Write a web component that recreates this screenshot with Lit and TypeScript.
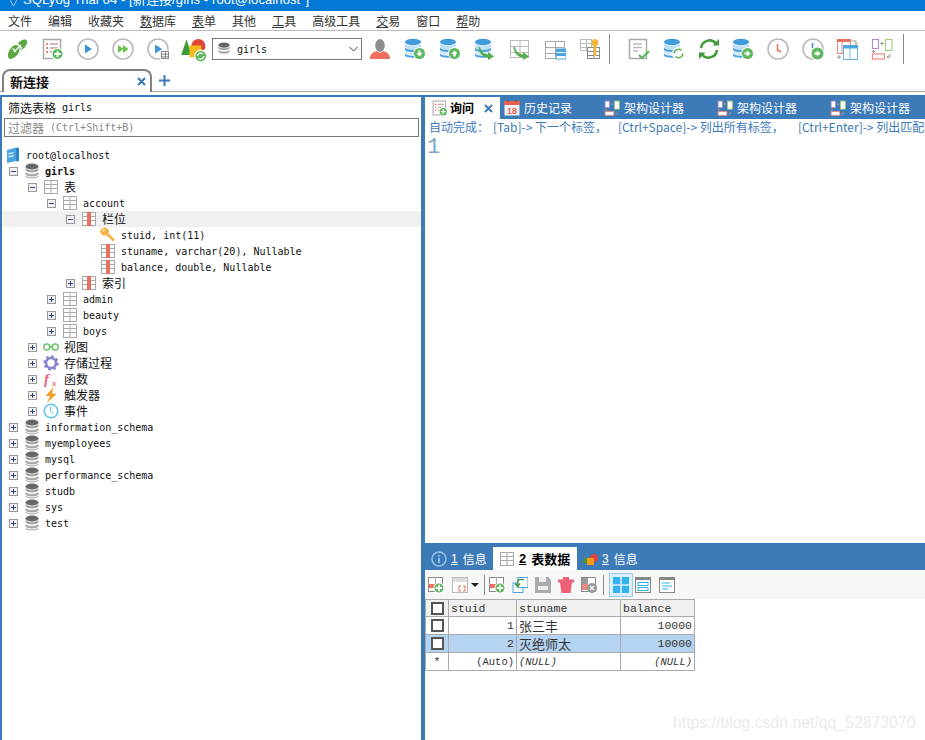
import { LitElement, css, html, svg } from 'lit'
import { customElement } from 'lit/decorators.js'

const BLUE = '#4aa5e0'
const GREEN = '#5cb85c'

// shared svg pieces, all drawn on a 22x22 box unless noted
const cylinder = svg`
  <ellipse cx="9" cy="4" rx="8" ry="3.2" fill="#3f9bdc"/>
  <path d="M1 5.5c2 3 14 3 16 0v3.5c-2 3-14 3-16 0z" fill="#bfe0f5"/>
  <path d="M1 9.5c2 3 14 3 16 0v2.5c-2 3-14 3-16 0z" fill="${BLUE}"/>
  <path d="M1 13c2 3 14 3 16 0v1.5c-2 3-14 3-16 0z" fill="#bfe0f5"/>
  <path d="M1 15.5c2 3 14 3 16 0v2c0 3-16 3-16 0z" fill="${BLUE}"/>`

const badge = (cx: number, cy: number, r: number, glyph: unknown) => svg`
  <circle cx="${cx}" cy="${cy}" r="${r + 1}" fill="#fff"/>
  <circle cx="${cx}" cy="${cy}" r="${r}" fill="${GREEN}"/>
  <g transform="translate(${cx} ${cy})">${glyph}</g>`

const plus = svg`<path d="M-3.2 0h6.4M0-3.2v6.4" stroke="#fff" stroke-width="1.8"/>`
const down = svg`<path d="M-1.2-3h2.4v2.4h2L0 3-3.2-.6h2z" fill="#fff"/>`
const up = svg`<path d="M-1.2 3h2.4V.6h2L0-3-3.2.6h2z" fill="#fff"/>`
const right = svg`<path d="M-3-1.2H-.6v-2L3 0-.6 3.2v-2H-3z" fill="#fff"/>`
const spin = svg`<path d="M-2.6 0a2.6 2.6 0 0 1 4.4-1.8M2.6 0a2.6 2.6 0 0 1-4.4 1.8" stroke="#fff" fill="none" stroke-width="1.1"/>`

const ring = svg`<circle cx="11" cy="11" r="10" fill="#fff" stroke="#bbb" stroke-width="1.6"/>`
const clockHand = svg`<path d="M10.5 6v6l3.5 2" stroke="#e8705f" stroke-width="1.6" fill="none"/>`
const curveArrow = svg`<path d="M6 9c1 5 4 7 8 7.5V14l6 4.5-6 3.5v-2.600C9 19.500 5 15 4.500 9z" fill="#52ae4a"/>`

const grid = (x: number, y: number, w: number, h: number, c = '#aaa') => svg`
  <rect x="${x + 0.5}" y="${y + 0.5}" width="${w - 1}" height="${h - 1}" fill="#fff" stroke="${c}"/>
  <path d="M${x} ${y + h / 3 + 0.5}h${w}M${x} ${y + (2 * h) / 3 + 0.5}h${w}M${x + w / 2 + 0.5} ${y}v${h}" stroke="${c}"/>`

const docLines = svg`
  <rect x="1.500" y="1.500" width="17" height="19" fill="#fff" stroke="#aaa" stroke-width="1.500"/>`

const icons: Record<string, unknown> = {
  connect: svg`
    <path d="M1 16c1-4 4-8 7-9 2 0 3 .5 4 2 1 2 .5 4-.5 6-2 3.500-6 6-8.500 6-1.500-.5-2.500-2.500-2-5z" fill="#5aa843"/>
    <path d="M11 5c2-2 5-4 7.500-3.500 2 .5 2 3 1 5-1 2.500-3.500 5-5.500 5.500-1-2.500-1.500-5-3-7z" fill="#5aa843"/>
    <path d="M7 14l7-7M5.500 10.500l3.500 3M12 7.500l3 3" stroke="#fff" stroke-width="1.300" fill="none"/>`,
  newQuery: svg`${docLines}
    <path d="M4 6h2M4 10h2M4 14h2" stroke="#e8604f" stroke-width="1.500"/>
    <path d="M8 6h8M8 10h8M8 14h4" stroke="#c9a0a0" stroke-width="1.500"/>
    ${badge(15.5, 16, 5, plus)}`,
  play: svg`${ring}<path d="M8 6.500l7 4.500-7 4.500z" fill="#3b95dd"/>`,
  playAll: svg`${ring}<path d="M6 7l5.500 4L6 15zM11 7l5.500 4-5.500 4z" fill="#6cc24a"/>`,
  playTable: svg`${ring}<path d="M8 6.500l7 4.500-7 4.500z" fill="#3b95dd"/>
    <rect x="13" y="12" width="9" height="10" fill="#fff"/>${grid(14, 13, 8, 8, '#888')}`,
  shapes: svg`
    <path d="M1 16L5.500 3 10 16z" fill="#3f9b35"/>
    <circle cx="15.500" cy="8.500" r="6" fill="#e0453a"/>
    <rect x="8" y="8" width="10" height="10" fill="#f7b916"/>
    ${badge(17.5, 17, 4.5, spin)}`,
  user: svg`
    <ellipse cx="11" cy="7.500" rx="4.800" ry="6.500" fill="#8e8e8e"/>
    <path d="M1 21c0-5 3-7 7-8 1.500 2 4.500 2 6 0 4 1 7 3 7 8z" fill="#ee6f5e"/>`,
  dbDown: svg`${cylinder}${badge(15.5, 15.5, 5.5, down)}`,
  dbUp: svg`${cylinder}${badge(15.5, 15.5, 5.5, up)}`,
  dbArrow: svg`${cylinder}${curveArrow}`,
  tableArrow: svg`${grid(1, 2, 19, 18, '#bbb')}${curveArrow}`,
  tableBlue: svg`${grid(1, 3, 20, 18, '#aaa')}
    <rect x="12" y="11" width="10" height="10" fill="#fff" stroke="${BLUE}"/>
    <rect x="12" y="11" width="10" height="3" fill="${BLUE}"/>
    <rect x="12" y="15" width="10" height="3" fill="${BLUE}"/>`,
  tableKey: svg`${grid(1, 1, 12, 12, '#bbb')}${grid(8, 9, 13, 12, '#888')}
    <circle cx="16" cy="4.500" r="3.500" fill="#f4b63f"/>
    <path d="M16 7v11" stroke="#f4b63f" stroke-width="2.600"/>`,
  docCheck: svg`${docLines}
    <path d="M5 6h9M5 9.500h9M5 13h5" stroke="#bbb" stroke-width="1.300"/>
    <path d="M11 17l3 3 7-7" stroke="#5cb85c" stroke-width="2.200" fill="none"/>`,
  dbRefresh: svg`${cylinder}
    <circle cx="15.500" cy="15.500" r="6.500" fill="#fff"/>
    <g transform="translate(15.500 15.500) scale(1.700)" >
      <path d="M-2.600 0a2.600 2.600 0 0 1 4.400-1.800M2.600 0a2.600 2.600 0 0 1-4.400 1.800" stroke="#52ae4a" fill="none" stroke-width=".8"/>
    </g>`,
  refresh: svg`
    <path d="M3 10a8.500 8.500 0 0 1 15-4.500" stroke="#3f9b35" stroke-width="2.400" fill="none"/>
    <path d="M19 12a8.500 8.500 0 0 1-15 4.500" stroke="#3f9b35" stroke-width="2.400" fill="none"/>
    <path d="M14.500 7.500H21V1zM7.500 14.500H1V21z" fill="#3f9b35"/>`,
  dbRight: svg`${cylinder}${badge(15.5, 15.5, 5.5, right)}`,
  clock: svg`${ring}${clockHand}`,
  clockRun: svg`${ring}<path d="M10.500 5v5" stroke="#3b95dd" stroke-width="1.600"/>${badge(15.5, 15.5, 6, right)}`,
  tables: svg`
    <rect x="1.500" y="1.500" width="13" height="14" fill="#fff" stroke="#ee8a7d"/>
    <rect x="1" y="1" width="14" height="3" fill="#e8705f"/>
    <path d="M6 4v11" stroke="#ee8a7d"/>
    <path d="M16 3h4v3M18.500 5l1.500 1.500L21.500 5" stroke="#999" fill="none"/>
    <rect x="7.500" y="7.500" width="14" height="14" fill="#fff" stroke="#6db4e6"/>
    <rect x="7" y="7" width="15" height="3.500" fill="#4aa5e0"/>
    <path d="M14 10v11" stroke="#6db4e6"/>
    <path d="M1 19h4M3 17v4" stroke="#999"/>`,
  schema: svg`
    <rect x="1.500" y="1.500" width="6" height="9" fill="#fff" stroke="#b08ec9" stroke-width="1.200"/>
    <rect x="14.500" y="1.500" width="6.500" height="11" fill="#fff" stroke="#a4cf7e" stroke-width="1.200"/>
    <rect x="1.500" y="16" width="12" height="5" fill="#fff" stroke="#ee8a7d" stroke-width="1.200"/>
    <path d="M9 5.500h4M11 3.500v4M2.500 12v3M1 13.500h3" stroke="#999"/>
    <path d="M19 16v3h-3M17.500 17.500L16 19l1.500 1.500" stroke="#999" fill="none"/>`,
}

const ic = (name: string, size = 22) =>
  html`<svg width="${size}" height="${size}" viewBox="0 0 22 22">${icons[name]}</svg>`

const dbGray = html`<svg width="16" height="16" viewBox="0 0 16 16">
  <ellipse cx="8" cy="3.500" rx="6.500" ry="3" fill="#666"/>
  <path d="M1.500 5c2 2.500 11 2.500 13 0v2.500c-2 2.500-11 2.500-13 0z" fill="#a8a8a8"/>
  <path d="M1.500 9c2 2.500 11 2.500 13 0v2.500c-2 2.500-11 2.500-13 0z" fill="#a8a8a8"/>
  <path d="M1.500 12.500c2 2.500 11 2.500 13 0v1c-1 2.500-12 2.500-13 0z" fill="#a8a8a8"/>
</svg>`

const treeIcons: Record<string, unknown> = {
  server: html`<svg width="16" height="16" viewBox="0 0 16 16">
    <path d="M2 3l9-2.500V14l-9 2z" fill="#4aa5e0"/><path d="M11 .5l3 .5v13l-3 .5z" fill="#2f85c6"/>
    <path d="M3.500 6l5-1v1.500l-5 1zM3.500 9l5-1v1.500l-5 1z" fill="#cfe8f8"/></svg>`,
  db: dbGray,
  table: html`<svg width="16" height="16" viewBox="0 0 16 16">
    <rect x="1.500" y="1.500" width="13" height="13" fill="#fff" stroke="#aaa"/>
    <path d="M1 5.500h14M1 9.500h14M8 1v14" stroke="#aaa"/></svg>`,
  column: html`<svg width="16" height="16" viewBox="0 0 16 16">
    <rect x="1.500" y="1.500" width="13" height="13" fill="#fff" stroke="#aaa"/>
    <path d="M1 5.500h14M1 9.500h14" stroke="#aaa"/><rect x="6" y="1" width="4" height="14" fill="#ea6f60"/></svg>`,
  key: html`<svg width="16" height="16" viewBox="0 0 16 16">
    <ellipse cx="4.500" cy="4.500" rx="4.500" ry="4" fill="#f5b547"/>
    <circle cx="3.500" cy="3.500" r="1.200" fill="#fde6b5"/>
    <path d="M6 6l8 7.500" stroke="#f5b547" stroke-width="3"/></svg>`,
  views: html`<svg width="16" height="16" viewBox="0 0 16 16">
    <circle cx="3.800" cy="8" r="3" fill="none" stroke="#6cc46a" stroke-width="1.500"/>
    <circle cx="12.200" cy="8" r="3" fill="none" stroke="#6cc46a" stroke-width="1.500"/>
    <path d="M6.500 7.500h3" stroke="#6cc46a" stroke-width="1.500"/></svg>`,
  procs: html`<svg width="16" height="16" viewBox="0 0 16 16">
    <circle cx="8" cy="8" r="5" fill="none" stroke="#8783d0" stroke-width="2.600"/>
    <circle cx="8" cy="8" r="6.700" fill="none" stroke="#8783d0" stroke-width="2" stroke-dasharray="2.600 2.660"/></svg>`,
  funcs: html`<svg width="16" height="16" viewBox="0 0 16 16">
    <text x="1" y="13" class="fx">f</text><text x="9" y="14.500" class="fxs">x</text></svg>`,
  triggers: html`<svg width="16" height="16" viewBox="0 0 16 16">
    <path d="M10.500 0L2.500 9h4.500L4 16l9.500-9.500H9z" fill="#f59b23"/></svg>`,
  events: html`<svg width="16" height="16" viewBox="0 0 16 16">
    <circle cx="8" cy="8" r="6.800" fill="#fff" stroke="#5cc0f0" stroke-width="1.500"/>
    <path d="M7.500 3.500V8l3 3" stroke="#5cc0f0" fill="none"/></svg>`,
}

type Row = { label: string; icon: string; depth: number; exp?: 'plus' | 'minus' | 'none'; bold?: boolean; hl?: boolean }

const rows: Row[] = [
  { label: 'girls', icon: 'db', depth: 0, exp: 'minus', bold: true },
  { label: '表', icon: 'table', depth: 1, exp: 'minus' },
  { label: 'account', icon: 'table', depth: 2, exp: 'minus' },
  { label: '栏位', icon: 'column', depth: 3, exp: 'minus', hl: true },
  { label: 'stuid, int(11)', icon: 'key', depth: 4, exp: 'none' },
  { label: 'stuname, varchar(20), Nullable', icon: 'column', depth: 4, exp: 'none' },
  { label: 'balance, double, Nullable', icon: 'column', depth: 4, exp: 'none' },
  { label: '索引', icon: 'column', depth: 3 },
  { label: 'admin', icon: 'table', depth: 2 },
  { label: 'beauty', icon: 'table', depth: 2 },
  { label: 'boys', icon: 'table', depth: 2 },
  { label: '视图', icon: 'views', depth: 1 },
  { label: '存储过程', icon: 'procs', depth: 1 },
  { label: '函数', icon: 'funcs', depth: 1 },
  { label: '触发器', icon: 'triggers', depth: 1 },
  { label: '事件', icon: 'events', depth: 1 },
  { label: 'information_schema', icon: 'db', depth: 0 },
  { label: 'myemployees', icon: 'db', depth: 0 },
  { label: 'mysql', icon: 'db', depth: 0 },
  { label: 'performance_schema', icon: 'db', depth: 0 },
  { label: 'studb', icon: 'db', depth: 0 },
  { label: 'sys', icon: 'db', depth: 0 },
  { label: 'test', icon: 'db', depth: 0 },
]

// first character of some menu items carries the access-key underline
const menus = [
  ['', '文件'], ['', '编辑'], ['', '收藏夹'], ['数', '据库'], ['表', '单'], ['', '其他'],
  ['工', '具'], ['', '高级工具'], ['交', '易'], ['', '窗口'], ['帮', '助'],
]
const toolsA = ['connect', 'newQuery', 'play', 'playAll', 'playTable', 'shapes']
const toolsB = ['user', 'dbDown', 'dbUp', 'dbArrow', 'tableArrow', 'tableBlue', 'tableKey']
const toolsC = ['docCheck', 'dbRefresh', 'refresh', 'dbRight', 'clock', 'clockRun', 'tables', 'schema']

const isCjk = (s: string) => /[^\x00-\x7f]/.test(s)

@customElement('app-root')
export class AppRoot extends LitElement {
  static styles = css`
    :host {
      display: block;
      position: relative;
      width: 925px;
      height: 740px;
      overflow: hidden;
      background: #fff;
      font-family: 'Noto Sans CJK SC', 'Noto Sans', sans-serif;
      font-size: 12px;
      color: #111;
    }
    .mono {
      font-family: 'DejaVu Sans Mono', 'Liberation Mono', monospace;
      font-size: 10px;
    }
    .title {
      height: 11px;
      background: #0078d7;
      color: #fff;
      overflow: hidden;
      font-size: 13px;
      line-height: 0;
      display: flex;
      align-items: flex-start;
      padding-left: 10px;
      white-space: nowrap;
      letter-spacing: 0.1px;
      font-family: 'Liberation Sans', 'Noto Sans CJK SC', sans-serif;
    }
    .title svg {
      margin-right: 6px;
      flex: none;
    }
    .menu {
      height: 19px;
      display: flex;
      gap: 16px;
      padding-left: 8px;
      align-items: center;
      border-bottom: 1px solid #bbb;
      line-height: 19px;
      color: #333;
    }
    .toolbar {
      height: 36px;
      display: flex;
      align-items: center;
    }
    .btn {
      width: 35px;
      height: 22px;
      display: flex;
      justify-content: center;
      align-items: center;
      flex: none;
    }
    .btn.c {
      width: 34.7px;
    }
    .sep {
      width: 1px;
      height: 30px;
      background: #888;
      flex: none;
    }
    .sep.a {
      margin: 0 12px 0 2px;
    }
    .sep.b {
      margin-left: 3px;
    }
    .combo {
      width: 150px;
      height: 22px;
      box-sizing: border-box;
      margin-left: 2px;
      border: 1px solid #777;
      display: flex;
      align-items: center;
      padding-left: 4px;
      gap: 6px;
      flex: none;
    }
    .combo svg:last-child {
      margin-left: auto;
      margin-right: 3px;
    }
    .tabs {
      height: 25px;
      box-sizing: border-box;
      margin-bottom: 3px;
      display: flex;
      align-items: flex-end;
      border-bottom: 1px solid #aaa;
    }
    .conn-tab {
      width: 150px;
      height: 23px;
      margin: 0 0 -1px 2px;
      border: 2px solid #808080;
      border-bottom: 0;
      border-radius: 8px 8px 0 0;
      display: flex;
      align-items: center;
      padding-left: 6px;
      box-sizing: border-box;
      background: #fff;
      font-weight: 700;
      font-size: 13px;
      flex: none;
    }
    .conn-tab svg {
      margin-left: auto;
      margin-right: 4px;
    }
    .add {
      width: 24px;
      display: flex;
      justify-content: center;
      align-self: center;
      margin-top: 2px;
      flex: none;
    }
    .main {
      display: flex;
      gap: 4px;
      height: 645px;
      box-sizing: border-box;
      padding: 2px 0 0 2px;
      background: #3d7ab8;
    }
    .left {
      width: 419px;
      flex: none;
      background: #fff;
      box-sizing: border-box;
      padding-top: 2px;
    }
    .filter-label {
      height: 18px;
      padding-left: 6px;
      display: flex;
      gap: 6px;
      align-items: center;
      line-height: 18px;
    }
    .filter {
      height: 19px;
      margin: 1px 2px 0;
      border: 1px solid #777;
      box-sizing: border-box;
      padding-left: 3px;
      display: flex;
      gap: 6px;
      align-items: center;
      color: #888;
      line-height: 17px;
    }
    .tree {
      margin-top: 10px;
    }
    .row {
      height: 16px;
      display: flex;
      align-items: center;
      line-height: 16px;
      white-space: nowrap;
    }
    .row .mono {
      padding-top: 2px;
    }
    .row.root {
      padding-left: 3px;
    }
    .row.hl {
      background: #f0f0f0;
    }
    .exp {
      width: 9px;
      height: 9px;
      margin-right: 6px;
      flex: none;
    }
    .ti {
      width: 16px;
      height: 16px;
      margin-right: 5px;
      flex: none;
    }
    .row.b .mono {
      font-weight: 700;
    }
    .fx {
      font: italic 700 15px 'Liberation Serif', serif;
      fill: #ec5f7a;
    }
    .fxs {
      font: italic 700 9px 'Liberation Serif', serif;
      fill: #ec5f7a;
    }
    .cal {
      font: 700 9px 'Liberation Sans', sans-serif;
      fill: #e8604f;
      text-anchor: middle;
    }
    .right {
      flex: 1;
      min-width: 0;
      display: flex;
      flex-direction: column;
      background: #fff;
    }
    .qtabs {
      height: 22px;
      background: #3d7ab8;
      display: flex;
      color: #fff;
      flex: none;
    }
    .qtab {
      display: flex;
      align-items: center;
      gap: 4px;
      flex: none;
      line-height: 22px;
      width: 113px;
      white-space: nowrap;
    }
    .qtab.hist {
      width: 104px;
      padding-left: 4px;
      box-sizing: border-box;
    }
    .qtab.on {
      width: 75px;
      background: #fff;
      color: #000;
      font-weight: 700;
      padding-left: 7px;
      gap: 0;
      box-sizing: border-box;
    }
    .qtab.on span {
      margin-left: 2px;
    }
    .qtab.on svg:last-child {
      margin-left: 10px;
    }
    .editor {
      height: 424px;
      flex: none;
      padding-left: 4px;
      box-sizing: border-box;
      overflow: hidden;
      color: #3d7ab8;
    }
    .hint {
      height: 17px;
      line-height: 16px;
      white-space: nowrap;
      display: flex;
      width: 600px;
    }
    .hint span {
      flex: none;
    }
    .hint .h1 {
      width: 64px;
    }
    .hint .h2 {
      width: 125px;
    }
    .hint .h3 {
      width: 180px;
    }
    .lineno {
      font: 22px/20px 'Liberation Mono', monospace;
      color: #7ba3c9;
      margin: 2px 0 0 -2px;
    }
    .band {
      height: 27px;
      background: #3d7ab8;
      display: flex;
      align-items: flex-end;
      color: #fff;
      flex: none;
    }
    .btab {
      height: 23px;
      display: flex;
      align-items: center;
      flex: none;
      box-sizing: border-box;
      white-space: nowrap;
    }
    .btab u {
      margin-right: 5px;
      font-family: 'Liberation Sans', sans-serif;
    }
    .btab.i {
      width: 68px;
      padding-left: 6px;
    }
    .btab.i svg {
      margin-right: 4px;
    }
    .btab.on {
      width: 84px;
      background: #fff;
      color: #000;
      font-weight: 700;
      font-size: 13px;
      padding-left: 6px;
    }
    .btab.on svg {
      margin-right: 4px;
    }
    .btab.t {
      padding-left: 5px;
    }
    .btab.t svg {
      margin-right: 4px;
    }
    .rtools {
      height: 29px;
      background: #f7f7f7;
      display: flex;
      align-items: center;
      padding-left: 3px;
      flex: none;
    }
    .tb {
      width: 16px;
      height: 16px;
      flex: none;
      margin-right: 7px;
    }
    .tb.w8 {
      margin-right: 8px;
    }
    .tb.w0 {
      margin-right: 3px;
    }
    .tb.w5 {
      margin-right: 6px;
    }
    .drop {
      margin-right: 5px;
      flex: none;
    }
    .rs {
      width: 1px;
      height: 20px;
      background: #888;
      flex: none;
      margin-right: 4px;
    }
    .rs.wide {
      margin-right: 5px;
    }
    .sel {
      width: 24px;
      height: 24px;
      box-sizing: border-box;
      border: 1px solid #9ccbef;
      background: #dcedfb;
      display: flex;
      align-items: center;
      justify-content: center;
      flex: none;
      margin-right: 2px;
    }
    table {
      border-collapse: collapse;
      table-layout: fixed;
      width: 269px;
      font-family: 'Liberation Mono', monospace;
      font-size: 11.5px;
      color: #333;
    }
    col.c0 {
      width: 23px;
    }
    col.c1 {
      width: 68px;
    }
    col.c2 {
      width: 104px;
    }
    col.c3 {
      width: 74px;
    }
    td,
    th {
      height: 18px;
      padding: 0 2px;
      border: 1px solid #aaa;
      font-weight: 400;
      text-align: left;
      line-height: 15px;
      box-sizing: border-box;
      overflow: hidden;
      white-space: nowrap;
    }
    th {
      height: 17px;
      background: #f0f0f0;
    }
    td.n {
      text-align: right;
    }
    td.c,
    th.c {
      text-align: center;
      padding: 0;
    }
    td.z {
      font-family: 'Noto Sans CJK SC', sans-serif;
      font-size: 13px;
    }
    tr.s td {
      background: #b5d4f2;
    }
    .nil {
      font-style: italic;
      font-size: 10.5px;
    }
    .auto {
      font-size: 10.5px;
    }
    .ck {
      display: block;
      width: 9px;
      height: 9px;
      margin: 0 auto;
      border: 2px solid #555;
      background: #fff;
    }
    .mark {
      position: absolute;
      left: 673px;
      top: 713px;
      font: 15.8px/20px 'Liberation Sans', sans-serif;
      color: #ebebeb;
      white-space: nowrap;
    }
  `

  private exp(kind: 'plus' | 'minus' | 'none' = 'plus') {
    if (kind === 'none') return html`<span class="exp"></span>`
    return html`<svg class="exp" viewBox="0 0 9 9">
      <rect x=".5" y=".5" width="8" height="8" fill="#f0f0f0" stroke="#999"/>
      <path d="${kind === 'plus' ? 'M2 4.500h5M4.500 2v5' : 'M2 4.500h5'}" stroke="#33458c"/>
    </svg>`
  }

  private label(text: string) {
    return isCjk(text) ? html`<span>${text}</span>` : html`<span class="mono">${text}</span>`
  }

  private renderRow(r: Row) {
    const pad = 7 + r.depth * 19
    return html`<div class="row ${r.hl ? 'hl' : ''} ${r.bold ? 'b' : ''}" style="padding-left:${pad}px">
      ${this.exp(r.exp)}
      <span class="ti">${treeIcons[r.icon]}</span>
      ${this.label(r.label)}
    </div>`
  }

  private renderToolbar() {
    return html`<div class="toolbar">
      ${toolsA.map((n) => html`<div class="btn">${ic(n, n === 'shapes' ? 26 : 22)}</div>`)}
      <div class="combo">
        <svg width="14" height="14" viewBox="0 0 16 16">
          <ellipse cx="8" cy="3.500" rx="6.500" ry="3" fill="#666"/>
          <path d="M1.500 5c2 2.500 11 2.500 13 0v2.500c-2 2.500-11 2.500-13 0zM1.500 9c2 2.500 11 2.500 13 0v2.500c-2 2.500-11 2.500-13 0z" fill="#a8a8a8"/>
        </svg>
        <span class="mono">girls</span>
        <svg width="9" height="6" viewBox="0 0 9 6"><path d="M.5 1l4 4 4-4" fill="none" stroke="#444"/></svg>
      </div>
      ${toolsB.map((n) => html`<div class="btn">${ic(n)}</div>`)}
      <div class="sep a"></div>
      ${toolsC.map((n) => html`<div class="btn c">${ic(n)}</div>`)}
      <div class="sep b"></div>
    </div>`
  }

  private renderResultTools() {
    const square = (inner: unknown, cls = '') =>
      html`<svg class="tb ${cls}" viewBox="0 0 16 16">${inner}</svg>`
    const gridRed = svg`
      <rect x=".5" y=".5" width="14" height="14" fill="#fff" stroke="#888"/>
      <path d="M0 7.500h15M7.500 0v15" stroke="#aaa"/>
      <rect x="1" y="7" width="6" height="4" fill="#ee6f5e"/>`
    return html`<div class="rtools">
      ${square(svg`${gridRed}${badge(11, 11, 4.5, plus)}`, 'w8')}
      ${square(svg`<rect x=".5" y=".5" width="15" height="15" fill="#fff" stroke="#bbb"/>
        <rect x="1" y="1" width="14" height="4" fill="#ddd"/>
        <path d="M9 9H7v5h2M11 9h2v5h-2" stroke="#ee6f5e" fill="none"/>`, 'w0')}
      <svg class="drop" width="8" height="4" viewBox="0 0 8 4"><path d="M0 0h8L4 4z" fill="#222"/></svg>
      <div class="rs"></div>
      ${square(svg`${gridRed}${badge(11, 11, 4.5, plus)}`)}
      ${square(svg`<rect x="1" y="6" width="10" height="9.500" fill="#fff" stroke="#4aa5e0"/>
        <rect x="6" y=".5" width="10" height="10" fill="#fff" stroke="#4aa5e0"/>
        <path d="M12 2.500H8.500a3 3 0 0 0-3 3V9M3 6.500l2.500 3 2.500-3" stroke="#4f9a4a" fill="none" stroke-width="1.500"/>`)}
      ${square(svg`<path d="M0 0h13l3 3v13H0z" fill="#aaa"/><rect x="4" y="0" width="7" height="5" fill="#eee"/>
        <rect x="3" y="9" width="10" height="4" fill="#eee"/>`)}
      ${square(svg`<path d="M0 2.500h16v3H14L12.500 16h-9L2 5.500H0z" fill="#ee6078"/><rect x="5" y="0" width="6" height="3" fill="#ee6078"/>`)}
      ${square(svg`<rect x=".5" y=".5" width="14" height="14" fill="#fff" stroke="#888"/>
        <rect x="1" y="1" width="6" height="6" fill="#999"/>
        <rect x="1" y="7" width="6" height="6" fill="#ee8a7d"/>
        <circle cx="11" cy="11" r="5" fill="#999"/>
        <path d="M9 9l4 4M13 9l-4 4" stroke="#fff" stroke-width="1.400"/>`, 'w5')}
      <div class="rs wide"></div>
      <div class="sel">
        <svg width="16" height="16" viewBox="0 0 16 16">
          <path d="M0 0h7.200v7.200H0zM8.800 0H16v7.200H8.800zM0 8.800h7.200V16H0zM8.800 8.800H16V16H8.800z" fill="#32b3ee"/>
        </svg>
      </div>
      ${square(svg`<rect x=".5" y=".5" width="15" height="15" fill="#fff" stroke="#888"/>
        <rect x="0" y="0" width="16" height="3" fill="#888"/>
        <rect x="3" y="5.500" width="10" height="3" fill="none" stroke="#32b3ee"/>
        <rect x="3" y="10.500" width="10" height="3" fill="none" stroke="#32b3ee"/>`, 'w8')}
      ${square(svg`<rect x=".5" y=".5" width="15" height="15" fill="#fff" stroke="#888"/>
        <rect x="0" y="0" width="16" height="3" fill="#888"/>
        <path d="M3 6h8M3 9h10M3 12h6" stroke="#32b3ee"/>`)}
    </div>`
  }

  private renderGrid() {
    const ck = html`<span class="ck"></span>`
    return html`<table>
      <colgroup><col class="c0" /><col class="c1" /><col class="c2" /><col class="c3" /></colgroup>
      <tr><th class="c">${ck}</th><th>stuid</th><th>stuname</th><th>balance</th></tr>
      <tr><td class="c">${ck}</td><td class="n">1</td><td class="z">张三丰</td><td class="n">10000</td></tr>
      <tr class="s"><td class="c">${ck}</td><td class="n">2</td><td class="z">灭绝师太</td><td class="n">10000</td></tr>
      <tr><td class="c">*</td><td class="n"><span class="auto">(Auto)</span></td><td><span class="nil">(NULL)</span></td><td class="n"><span class="nil">(NULL)</span></td></tr>
    </table>`
  }

  render() {
    const x = (c: string, s = 9) => html`<svg width="${s}" height="${s}" viewBox="0 0 9 9"><path d="M1 1l7 7M8 1l-7 7" stroke="${c}" stroke-width="2"/></svg>`
    return html`
      <div class="title">
        <svg width="7" height="6" viewBox="0 0 7 6"><path d="M0 0l3.500 6L7 0" fill="none" stroke="#9cc9ee"/></svg>
        SQLyog Trial 64 - [新连接/girls - root@localhost*]
      </div>
      <div class="menu">${menus.map(([k, rest]) => html`<span>${k ? html`<u>${k}</u>` : ''}${rest}</span>`)}</div>
      ${this.renderToolbar()}
      <div class="tabs">
        <div class="conn-tab">新连接${x('#3d7ab8')}</div>
        <div class="add">
          <svg width="11" height="11" viewBox="0 0 11 11"><path d="M0 5.500h11M5.500 0v11" stroke="#3d7ab8" stroke-width="2"/></svg>
        </div>
      </div>
      <div class="main">
        <div class="left">
          <div class="filter-label"><span>筛选表格</span><span class="mono">girls</span></div>
          <div class="filter"><span>过滤器</span><span class="mono">(Ctrl+Shift+B)</span></div>
          <div class="tree">
            <div class="row root">
              <span class="ti">${treeIcons.server}</span>
              <span class="mono">root@localhost</span>
            </div>
            ${rows.map((r) => this.renderRow(r))}
          </div>
        </div>
        <div class="right">
          <div class="qtabs">
            <div class="qtab on">${ic('newQuery', 16)}<span>询问</span>${x('#3d7ab8')}</div>
            <div class="qtab hist">
              <svg width="16" height="16" viewBox="0 0 16 16">
                <rect x=".5" y="1" width="15" height="14.500" fill="#f2f2f2"/>
                <rect x="0" y="1" width="16" height="4" fill="#e8604f"/>
                <path d="M4 0v2M12 0v2" stroke="#555"/>
                <text x="8" y="14" class="cal">18</text>
              </svg>
              <span>历史记录</span>
            </div>
            ${[0, 1, 2].map(() => html`<div class="qtab">${ic('schema', 16)}<span>架构设计器</span></div>`)}
          </div>
          <div class="editor">
            <div class="hint">
              <span class="h1">自动完成：</span>
              <span class="h2">[Tab]-> 下一个标签，</span>
              <span class="h3">[Ctrl+Space]-> 列出所有标签，</span>
              <span>[Ctrl+Enter]-> 列出匹配标签</span>
            </div>
            <div class="lineno">1</div>
          </div>
          <div class="band">
            <div class="btab i">
              <svg width="16" height="16" viewBox="0 0 16 16">
                <circle cx="8" cy="8" r="7" fill="none" stroke="#9cc4e8" stroke-width="1.400"/>
                <path d="M8 4v1.600M8 7v5" stroke="#9cc4e8" stroke-width="1.800"/>
              </svg>
              <u>1</u>信息
            </div>
            <div class="btab on">${treeIcons.table}<u>2</u>表数据</div>
            <div class="btab t">
              <svg width="16" height="16" viewBox="0 0 16 16">
                <path d="M0 12l4-7 4 7z" fill="#3f9b35"/><circle cx="12" cy="7" r="4" fill="#e0453a"/>
                <rect x="5" y="7" width="7" height="7" fill="#f79a16"/>
              </svg>
              <u>3</u>信息
            </div>
          </div>
          ${this.renderResultTools()}
          ${this.renderGrid()}
        </div>
      </div>
      <div class="mark">https://blog.csdn.net/qq_52873070</div>
    `
  }
}
